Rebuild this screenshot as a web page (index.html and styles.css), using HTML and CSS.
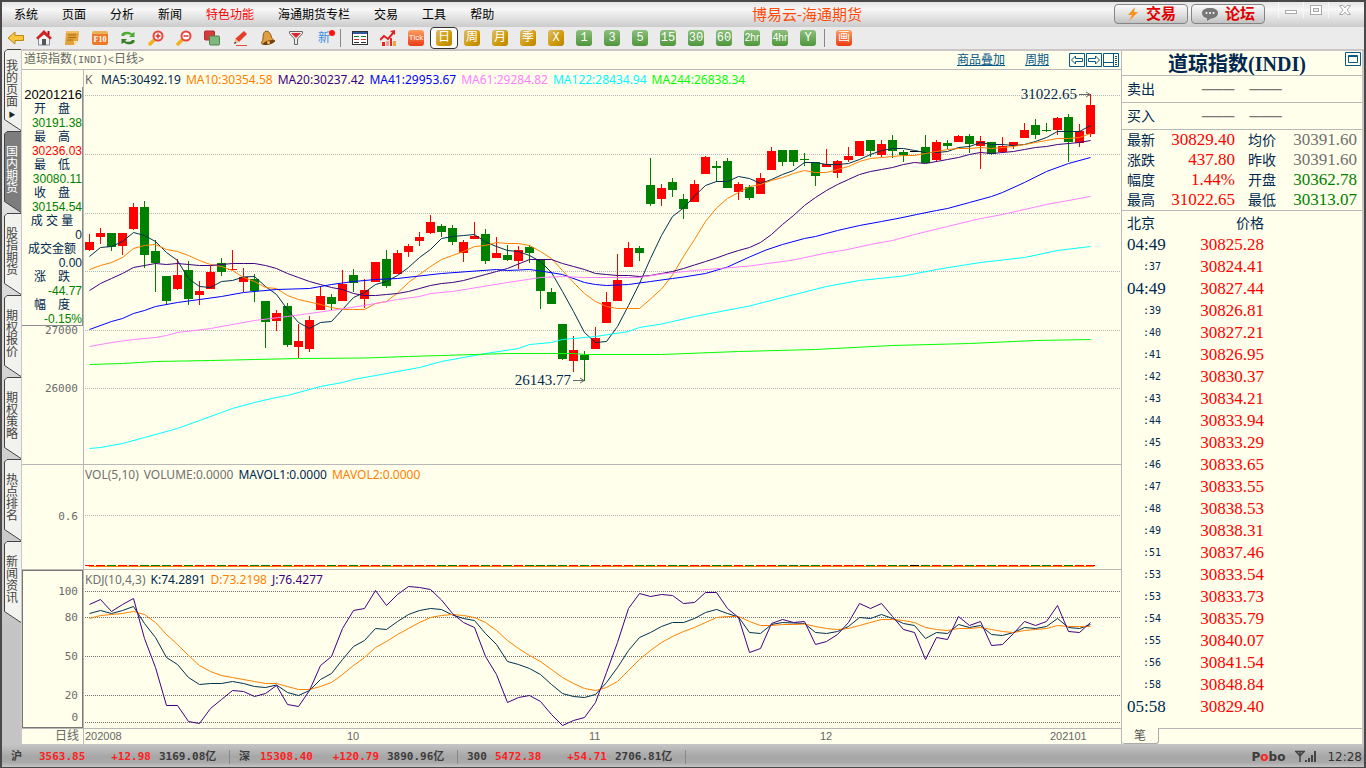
FILE: index.html
```html
<!DOCTYPE html>
<html lang="zh-CN">
<head>
<meta charset="utf-8">
<title>博易云-海通期货</title>
<link rel="stylesheet" href="styles.css">
</head>
<body>
<div class="window">
  <header class="menubar">
    <nav class="menus">
      <button class="menu">系统</button><button class="menu">页面</button><button class="menu">分析</button><button class="menu">新闻</button><button class="menu hot">特色功能</button><button class="menu">海通期货专栏</button><button class="menu">交易</button><button class="menu">工具</button><button class="menu">帮助</button>
    </nav>
    <h1 class="brand">博易云-海通期货</h1>
    <div class="actions">
      <button class="action"><svg width="14" height="16" viewBox="0 0 14 16"><path d="M9 1 2 9h4l-3 6 9-9H8z" fill="#f7941d"/></svg>交易</button>
      <button class="action"><svg width="18" height="16" viewBox="0 0 18 16"><path d="M9 2c5 0 8 2 8 5s-3 5.500-7 5.500L6 15v-3C3 11.500 1 10 1 7c0-3 3-5 8-5z" fill="#777"/><g fill="#fff"><circle cx="5.500" cy="7" r="1"/><circle cx="9" cy="7" r="1"/><circle cx="12.500" cy="7" r="1"/></g></svg>论坛</button>
    </div>
    <div class="controls">
      <button class="control" aria-label="最小化"><svg width="14" height="12"><rect x="1.500" y="6.500" width="11" height="3" fill="#fff" stroke="#aaa"/></svg></button>
      <button class="control" aria-label="还原"><svg width="14" height="12"><rect x="1.500" y="1.500" width="11" height="9" fill="#fff" stroke="#aaa"/><rect x="4.500" y="4.500" width="5" height="3" fill="#eee" stroke="#aaa"/></svg></button>
      <button class="control close" aria-label="关闭"><svg width="14" height="12"><path d="M1.500 1.500h3.500l2 2.500 2-2.500h3.500l-3.500 4.500 3.500 4.500H9L7 8l-2 2.500H1.500L5 6z" fill="#fff" stroke="#aaa"/></svg></button>
    </div>
  </header>

  <div class="toolbar">
    <button class="tool" aria-label="后退"><svg width="18" height="16" viewBox="0 0 18 16"><path d="M1 8 8 2v3.500h8.500v5H8V14z" fill="#f8c53c" stroke="#b98a18"/></svg></button>
    <button class="tool" aria-label="主页"><svg width="16" height="16" viewBox="0 0 16 16"><path d="M2.500 8v7h11V8L8 3z" fill="#eef3f8" stroke="#889"/><path d="M11.500 1h2v4h-2z" fill="#a11"/><path d="M0 8 8 0l8 8-2 1.500-6-5-6 5z" fill="#cf2424"/><path d="M6 9h4v6H6z" fill="#555"/></svg></button>
    <button class="tool" aria-label="公告"><svg width="16" height="16" viewBox="0 0 16 16"><path d="M2 1h13l-1 10-4 4H1z" fill="#e3a23c"/><path d="m14 11-4 4V11z" fill="#ffe0a0"/><path d="M4 5h8M4 7.500h8M3 10h6" stroke="#a86b12"/><path d="M2 1h13v2H2z" fill="#f0bf68"/></svg></button>
    <button class="tool" aria-label="F10"><span class="f10">F10</span></button>
    <button class="tool" aria-label="刷新"><svg width="16" height="16" viewBox="0 0 16 16"><path d="M1.500 6V4c2-3 8-3 10.500-.500L14.500 2v5H9l2-2C8 3.500 5 4 4 6z" fill="#4eaa32"/><path d="M14.500 10v2c-2 3-8 3-10.500.500L1.500 14V9H7l-2 2c3 1.500 6 1 7-1z" fill="#367d25"/></svg></button>
    <button class="tool" aria-label="放大"><svg width="16" height="16" viewBox="0 0 16 16"><path d="m7 9-5 5" stroke="#f0b020" stroke-width="3.500" stroke-linecap="round"/><circle cx="10" cy="6" r="4.500" fill="#fff" stroke="#e8453b" stroke-width="2"/><path d="M7.500 6h5M10 3.500v5" stroke="#d9342b" stroke-width="1.500"/></svg></button>
    <button class="tool" aria-label="缩小"><svg width="16" height="16" viewBox="0 0 16 16"><path d="m7 9-5 5" stroke="#f0b020" stroke-width="3.500" stroke-linecap="round"/><circle cx="10" cy="6" r="4.500" fill="#fff" stroke="#e8453b" stroke-width="2"/><path d="M7.500 6h5" stroke="#d9342b" stroke-width="1.500"/></svg></button>
    <button class="tool" aria-label="叠加"><svg width="16" height="16" viewBox="0 0 16 16"><rect x=".500" y="1" width="10" height="9" rx="1" fill="#d8393d" stroke="#a33"/><rect x="5.500" y="6" width="10" height="9" rx="1" fill="#7fb77f" stroke="#4d854d"/></svg></button>
    <button class="tool" aria-label="画线"><svg width="16" height="16" viewBox="0 0 16 16"><path d="m12 1 3 3-8 8-4-3z" fill="#e83b2c"/><path d="m3.500 8.500 3.500 3.500-5 2z" fill="#eec38b"/><path d="m2 14 1-2.500L4.500 13z" fill="#333"/><path d="M4 15.500h11" stroke="#e64b35"/></svg></button>
    <button class="tool" aria-label="预警"><svg width="16" height="16" viewBox="0 0 16 16"><path d="M5 1.500c3-1 5 1 6 4 .500 2.500 1.500 4 4 5.500L3 14.500c-2-1-2-2-1-3C4 9 2 4 5 1.500z" fill="#e0a040" stroke="#8b5213"/><ellipse cx="9" cy="12.500" rx="6" ry="2" fill="#6f3d10" transform="rotate(-15 9 12.500)"/><circle cx="8.500" cy="12.500" r="1.500" fill="#f6c565"/></svg></button>
    <button class="tool" aria-label="筛选"><svg width="16" height="16" viewBox="0 0 16 16"><path d="M1.500 1.500h13v2L9.500 9v5.500h-3V9l-5-5.500z" fill="#eee" stroke="#666"/><path d="M3 3h10L8 8z" fill="#dc2430"/></svg></button>
    <button class="tool new" aria-label="新">新<svg class="dot" width="6" height="6"><circle cx="3" cy="3" r="3" fill="#f11"/></svg></button>
    <span class="divider"></span>
    <button class="tool" aria-label="报价"><svg width="16" height="16" viewBox="0 0 16 16"><rect x=".500" y="1.500" width="15" height="13" fill="#fff" stroke="#333"/><path d="M1 3h14" stroke="#345b9c" stroke-width="2"/><path d="M2 6.500h5m2 0h5" stroke="#147b25"/><path d="M2 9.500h5m2 0h5" stroke="#c33"/><path d="M2 12.500h5m2 0h5" stroke="#333"/></svg></button>
    <button class="tool" aria-label="分时"><svg width="16" height="16" viewBox="0 0 16 16"><path d="M2 12h3v4H2zM10 8h2v8h-2z" fill="#e22"/><path d="M6 11h3v5H6z" fill="#e5a49b"/><path d="M13 11h3v5h-3z" fill="#f0a43c"/><path d="m0 10 4-4 4 3 6-7" stroke="#d22" stroke-width="2" fill="none"/><path d="m10 1 5-1v5z" fill="#d22"/></svg></button>
    <button class="tool"><span class="tile orange tiny">Tick</span></button>
    <button class="tool selected"><span class="tile gold">日</span></button>
    <button class="tool"><span class="tile gold">周</span></button>
    <button class="tool"><span class="tile gold">月</span></button>
    <button class="tool"><span class="tile gold">季</span></button>
    <button class="tool"><span class="tile gold">X</span></button>
    <button class="tool"><span class="tile green">1</span></button>
    <button class="tool"><span class="tile green">3</span></button>
    <button class="tool"><span class="tile green">5</span></button>
    <button class="tool"><span class="tile green">15</span></button>
    <button class="tool"><span class="tile green">30</span></button>
    <button class="tool"><span class="tile green">60</span></button>
    <button class="tool"><span class="tile green small">2hr</span></button>
    <button class="tool"><span class="tile green small">4hr</span></button>
    <button class="tool"><span class="tile green">Y</span></button>
    <span class="divider"></span>
    <button class="tool"><span class="tile orange">画</span></button>
  </div>

  <div class="workspace">
    <nav class="pages">
      <button class="page first"><svg class="shape" width="17" height="82"><path d="M17 .5H3L.500 3v67.500L17 81.500"/></svg>我的页面<span class="more">▶</span></button>
      <button class="page current"><svg class="shape" width="17" height="82"><path d="M17 .5H3L.500 3v67.500L17 81.500"/></svg>国内期货</button>
      <button class="page"><svg class="shape" width="17" height="82"><path d="M17 .5H3L.500 3v67.500L17 81.500"/></svg>股指期货</button>
      <button class="page"><svg class="shape" width="17" height="82"><path d="M17 .5H3L.500 3v67.500L17 81.500"/></svg>期权报价</button>
      <button class="page"><svg class="shape" width="17" height="82"><path d="M17 .5H3L.500 3v67.500L17 81.500"/></svg>期权策略</button>
      <button class="page"><svg class="shape" width="17" height="82"><path d="M17 .5H3L.500 3v67.500L17 81.500"/></svg>热点排名</button>
      <button class="page"><svg class="shape" width="17" height="82"><path d="M17 .5H3L.500 3v67.500L17 81.500"/></svg>新闻资讯</button>
    </nav>

    <main class="charts">
      <div class="chart-head">
        <h2 class="symbol">道琼指数<span class="latin">(INDI)&lt;</span>日线<span class="latin">&gt;</span></h2>
        <a class="link" href="#overlay">商品叠加</a>
        <a class="link" href="#period">周期</a>
        <div class="pager">
          <button aria-label="上一个"><svg width="16" height="15"><path d="M.500.500h15v13H.500zM2.500 7l4-4v2.500h7v3h-7V11z"/></svg></button>
          <button aria-label="下一个"><svg width="16" height="15"><path d="M.500.500h15v13H.500zM13.500 7l-4-4v2.500h-7v3h7V11z"/></svg></button>
          <button aria-label="布局"><svg width="16" height="15"><path d="M.500.500h15v13H.500zM10.500 1v12M1 9.500h9M12 3.500h2M12 5.500h2M12 7.500h2M12 9.500h2M12 11.500h2"/></svg></button>
        </div>
      </div>

      <div class="panel price-panel">
        <div class="axis">
          <svg width="61" height="394"><text x="56" y="264">27000</text><text x="56" y="322">26000</text></svg>
          <dl class="info">
            <dt class="day">20201216</dt>
            <dt>开　盘</dt><dd class="down">30191.38</dd>
            <dt>最　高</dt><dd class="up">30236.03</dd>
            <dt>最　低</dt><dd class="down">30080.11</dd>
            <dt>收　盘</dt><dd class="down">30154.54</dd>
            <dt>成 交 量</dt><dd>0</dd>
            <dt>成交金额</dt><dd>0.00</dd>
            <dt>涨　跌</dt><dd class="down">-44.77</dd>
            <dt>幅　度</dt><dd class="down">-0.15%</dd>
          </dl>
        </div>
        <div class="plot">
          <div class="legend"><span class="name">K</span><span class="navy">MA5:30492.19</span><span class="amber">MA10:30354.58</span><span class="purple">MA20:30237.42</span><span class="blue">MA41:29953.67</span><span class="pink">MA61:29284.82</span><span class="cyan">MA122:28434.94</span><span class="lime">MA244:26838.34</span></div>
          <svg id="price" class="canvas price-canvas"></svg>
        </div>
      </div>

      <div class="panel">
        <div class="axis"><svg width="61" height="104"><text x="56" y="55">0.6</text></svg></div>
        <div class="plot">
          <div class="legend"><span class="gray">VOL(5,10)</span><span class="gray">VOLUME:0.0000</span><span class="navy">MAVOL1:0.0000</span><span class="amber">MAVOL2:0.0000</span></div>
          <svg id="volume" class="canvas volume-canvas"></svg>
        </div>
      </div>

      <div class="panel">
        <div class="axis boxed"><svg width="59" height="156"><text x="55" y="24">100</text><text x="55" y="50">80</text><text x="55" y="89">50</text><text x="55" y="128">20</text><text x="55" y="150">0</text></svg></div>
        <div class="plot">
          <div class="legend kdj"><span class="gray">KDJ(10,4,3)</span><span class="navy">K:74.2891</span><span class="amber">D:73.2198</span><span class="purple">J:76.4277</span></div>
          <svg id="kdj" class="canvas kdj-canvas"></svg>
        </div>
      </div>

      <div class="panel time-axis">
        <div class="axis period">日线</div>
        <div class="plot"><svg class="canvas months" height="15"><text x="1" y="11">202008</text><text x="263" y="11">10</text><text x="505" y="11">11</text><text x="736" y="11">12</text><text x="966" y="11">202101</text></svg></div>
      </div>
    </main>

    <aside class="quote">
      <div class="quote-title"><h2>道琼指数<span class="latin">(INDI)</span></h2><button class="max" aria-label="最大化"><svg width="16" height="14"><path d="M.500.500h15v13H.500zM3.500 3.500h9v7h-9zM3.500 4.500h9"/></svg></button></div>
      <div class="book"><span>卖出</span><span class="empty">———</span><span class="empty">———</span></div>
      <div class="book"><span>买入</span><span class="empty">———</span><span class="empty">———</span></div>
      <dl class="stats">
        <dt>最新</dt><dd class="up">30829.40</dd><dt>均价</dt><dd class="gray">30391.60</dd>
        <dt>涨跌</dt><dd class="up">437.80</dd><dt>昨收</dt><dd class="gray">30391.60</dd>
        <dt>幅度</dt><dd class="up">1.44%</dd><dt>开盘</dt><dd class="down">30362.78</dd>
        <dt>最高</dt><dd class="up">31022.65</dd><dt>最低</dt><dd class="down">30313.07</dd>
      </dl>
      <table class="ticks">
        <thead><tr><th>北京</th><th>价格</th></tr></thead>
        <tbody>
          <tr><td>04:49</td><td>30825.28</td></tr>
          <tr><td class="sec">:37</td><td>30824.41</td></tr>
          <tr><td>04:49</td><td>30827.44</td></tr>
          <tr><td class="sec">:39</td><td>30826.81</td></tr>
          <tr><td class="sec">:40</td><td>30827.21</td></tr>
          <tr><td class="sec">:41</td><td>30826.95</td></tr>
          <tr><td class="sec">:42</td><td>30830.37</td></tr>
          <tr><td class="sec">:43</td><td>30834.21</td></tr>
          <tr><td class="sec">:44</td><td>30833.94</td></tr>
          <tr><td class="sec">:45</td><td>30833.29</td></tr>
          <tr><td class="sec">:46</td><td>30833.65</td></tr>
          <tr><td class="sec">:47</td><td>30833.55</td></tr>
          <tr><td class="sec">:48</td><td>30838.53</td></tr>
          <tr><td class="sec">:49</td><td>30838.31</td></tr>
          <tr><td class="sec">:51</td><td>30837.46</td></tr>
          <tr><td class="sec">:53</td><td>30833.54</td></tr>
          <tr><td class="sec">:53</td><td>30833.73</td></tr>
          <tr><td class="sec">:54</td><td>30835.79</td></tr>
          <tr><td class="sec">:55</td><td>30840.07</td></tr>
          <tr><td class="sec">:56</td><td>30841.54</td></tr>
          <tr><td class="sec">:58</td><td>30848.84</td></tr>
          <tr><td>05:58</td><td>30829.40</td></tr>
        </tbody>
      </table>
      <div class="quote-tabs"><button class="quote-tab">笔</button><span class="rest"></span></div>
    </aside>
  </div>

  <footer class="status">
    <div class="index"><span class="market">沪</span><span class="pair"><b>3563.85</b><b>+12.98</b></span><span class="amount">3169.08亿</span></div>
    <div class="index"><span class="market near">深</span><span class="pair wide"><b>15308.40</b><b>+120.79</b></span><span class="amount">3890.96亿</span></div>
    <div class="index"><span class="market">300</span><span class="pair"><b>5472.38</b><b>+54.71</b></span><span class="amount">2706.81亿</span></div>
    <div class="tray"><span class="logo">P<b>o</b>bo</span><svg width="22" height="14" viewBox="0 0 22 14"><path d="M0 1.500h10M1.500 2l3.500 4L8.500 2M5 2v10" fill="none" stroke="#444" stroke-width="1.500"/><path d="M10 10h2v2h-2zM13 8h2v4h-2zM16 5h2v7h-2zM19 1h2v11h-2z" fill="#444"/></svg><time class="clock">12:28</time></div>
  </footer>
</div>
<script src="chart.js"></script>
</body>
</html>
```

FILE: styles.css
```css
* { box-sizing: border-box; }
body { margin: 0; font: 12px/14px "Liberation Sans", "Noto Sans CJK SC", sans-serif; color: #002850; background: #ebebeb; }
button { border: 0; padding: 0; margin: 0; background: none; font: inherit; color: inherit; }
h1, h2, dl, dd { margin: 0; font-weight: normal; }
svg { display: block; }
.window { min-height: 100vh; display: flex; flex-direction: column; border: solid #4b484a; border-width: 2px 2px 1px 2px; }

.menubar { height: 25px; display: flex; background: linear-gradient(#e4e4e4, #f7f7f7 30%, #cbcbcb); color: #000; }
.menus { display: flex; }
.menu { padding: 0 12px; }
.hot { color: #f00; }
.brand { flex: 1; text-align: center; font-size: 15px; line-height: 25px; color: #ff4b0a; padding-right: 6px; }
.actions { display: flex; gap: 3px; padding: 2px 0 3px; }
.action { width: 74px; display: flex; align-items: center; justify-content: center; gap: 6px; border: 1px solid #858585; border-radius: 4px; background: linear-gradient(#fbfbfb, #e2e2e2 50%, #c2c2c2); color: #e00000; font-size: 15px; font-weight: bold; }
.controls { display: flex; height: 16px; margin-left: 13px; margin-right: 3px; }
.control { width: 25px; border-left: 1px solid #f8f8f8; display: flex; align-items: center; justify-content: center; }
.close { width: 33px; }

.toolbar { height: 24px; display: flex; background: #ebebeb; border-bottom: 2px solid #ccc5c8; }
.tool { width: 28px; display: flex; align-items: center; justify-content: center; position: relative; }
.divider { width: 8px; padding: 2px 0; }
.divider::before { content: ""; display: block; width: 1px; height: 18px; margin-left: 2px; background: #888; }
.selected { border: 1px solid #333; border-radius: 4px; background: #fff; }
.tile { width: 16px; height: 16px; border-radius: 3px; color: #fff; font: 12px/16px "Liberation Mono", "Noto Sans CJK SC", monospace; text-align: center; white-space: nowrap; }
.gold { background: linear-gradient(135deg, #dcbc68, #cf9a08 60%, #b98500); }
.green { background: linear-gradient(#8cc07c, #4f963c); }
.orange { background: linear-gradient(#ffa060, #ea3a14); }
.small { font: 10px/16px "Liberation Sans", sans-serif; }
.tiny { font: 8px/16px "Liberation Sans", sans-serif; }
.f10 { width: 16px; height: 14px; border-radius: 2px; border-top: 3px solid #e9b25a; background: #ee7a26; color: #fff; font: bold 8px/11px "Liberation Serif", serif; }
.new { color: #3b8ee0; }
.dot { position: absolute; right: 3px; top: 3px; }

.workspace { flex: 1; display: flex; }
.pages { width: 20px; padding-left: 2px; border-right: 2px solid #ccc5c8; background: linear-gradient(#e9e9e9, #c4c4c4 85%); margin-top: -2px; }
.page { position: relative; z-index: 0; width: 17px; height: 82px; padding-top: 15px; display: flex; flex-direction: column; align-items: center; line-height: 12px; color: #444; word-break: break-all; padding-left: 2px; padding-right: 3px; }
.first { padding-top: 11px; }
.more { font-size: 7px; line-height: 14px; color: #222; }
.shape { position: absolute; left: 0; top: 0; z-index: -1; fill: #f2f2ee; stroke: #444; }
.current { color: #fff; }
.current .shape { fill: #7d7d7d; }

.charts { flex: 1; min-width: 0; background: #ffffeb; display: flex; flex-direction: column; }
.chart-head { height: 19px; display: flex; align-items: center; border-bottom: 1px solid #b8b8b8; padding: 0 2px 0 2px; }
.symbol { flex: 1; font-size: 12px; line-height: 18px; color: #666; }
.symbol .latin { font-family: "Liberation Mono", monospace; font-size: 10px; }
.link { color: #07598a; margin-right: 20px; }
.pager { display: flex; gap: 1px; }
.pager svg, .max svg { fill: none; stroke: #07598a; }
.panel { display: flex; border-bottom: 1px solid #b8b8b8; }
.price-panel { flex: 1; }
.axis { width: 62px; flex: none; border-right: 1px solid #b8b8b8; position: relative; }
.axis text { font: 11px "DejaVu Sans Mono", monospace; fill: #6b6b6b; text-anchor: end; }
.boxed { width: 61px; border: 1px solid #777; margin-right: 1px; }
.info { position: absolute; left: 0; top: 17px; width: 61px; height: 239px; padding-top: 1px; background: #ffffeb; border: solid #8c8c8c; border-width: 0 1px 1px 0; text-align: right; }
.info dt { text-align: center; height: 14px; }
.info .day { font-size: 13px; color: #000; text-align: right; }
.info dd { height: 14px; }
.plot { flex: 1; min-width: 0; }
.boxed + .plot { border-left: 1px solid #b8b8b8; margin-left: -1px; }
.legend { height: 18px; display: flex; gap: 5px; padding-left: 1px; font: 12px/20px "Noto Sans", sans-serif; }
.kdj { height: 16px; }
.legend .name { width: 11px; color: #666; }
.canvas { width: 100%; overflow: visible; }
.price-canvas { height: 376px; }
.volume-canvas { height: 86px; }
.kdj-canvas { height: 142px; }
.canvas line { stroke-dasharray: 1 1; }
.canvas polyline { fill: none; stroke-width: 1; }
.canvas .mark { font: 15px "Liberation Serif", serif; fill: #002850; }
.time-axis { border-bottom: 0; }
.period { line-height: 15px; text-align: right; padding-right: 4px; color: #666; }
.months text { font: 11px "Liberation Sans", sans-serif; fill: #666; }

.up { color: #f00; }
.down { color: #008000; }
.gray { color: #707070; }
.navy { color: #002850; }
.amber { color: #ff8000; }
.purple { color: #400080; }
.blue { color: #0000ff; }
.pink { color: #ff80ff; }
.cyan { color: #00f8ff; }
.lime { color: #00ff00; }

.quote { width: 243px; display: flex; flex-direction: column; background: #ffffeb; border-left: 1px solid #b8b8b8; border-right: 2px solid #ccc5c8; font-size: 14px; }
.quote-title { height: 25px; display: flex; border-bottom: 1px solid #b8b8b8; }
.quote-title h2 { flex: 1; padding-left: 7px; text-align: center; font: bold 20px/24px "Noto Sans CJK SC", sans-serif; }
.quote-title .latin { font-family: "Liberation Serif", serif; }
.max { align-self: flex-start; padding: 1px 1px 0 0; }
.book { height: 27px; display: flex; align-items: center; gap: 15px; padding-left: 5px; border-bottom: 1px solid #b8b8b8; }
.book span:first-child { width: 60px; }
.empty { color: #777; font: 18px "Liberation Mono", monospace; }
.stats { display: grid; grid-template-columns: 36px 72px 1fr auto; padding: 0 5px; line-height: 20px; border-bottom: 1px solid #b8b8b8; }
.stats dt:nth-of-type(even) { padding-left: 13px; }
.stats dd { text-align: right; height: 20px; font: 17px/20px "Liberation Serif", serif; }
.ticks { border-collapse: collapse; width: 142px; }
.ticks th { font-weight: normal; padding: 0; height: 23px; }
.ticks th:first-child { text-align: left; padding-left: 5px; }
.ticks th:last-child, .ticks td:last-child { text-align: right; }
.ticks td { height: 22px; padding: 0; font: 17px/22px "Liberation Serif", serif; color: #f00; }
.ticks td:first-child { width: 50px; padding-left: 5px; color: #002850; }
.ticks .sec { font: 10px/22px "DejaVu Sans Mono", monospace; text-align: right; padding-right: 11px; }
.quote-tabs { display: flex; margin-top: auto; height: 16px; color: #555; font-size: 12px; }
.quote-tab { width: 37px; border: solid #aaa; border-width: 0 1px 1px 0; border-radius: 0 0 3px 3px; }
.rest { flex: 1; border-top: 1px solid #b8b8b8; }

.status { height: 23px; display: flex; align-items: center; padding: 2px 2px 0 9px; background: linear-gradient(#c6c6c6, #a6a6a6 55%, #aaa 80%, #c4c4c4); color: #3c3c3c; font: bold 11px/14px "DejaVu Sans Mono", "Noto Sans CJK SC", monospace; }
.index { display: flex; height: 14px; margin-right: 9px; padding-right: 8px; border-right: 1px solid #888; }
.market { width: 28px; }
.near { width: 21px; }
.pair { width: 112px; margin-right: 8px; display: flex; justify-content: space-between; color: #ff2020; }
.wide { width: 119px; }
.amount { width: 62px; }
.tray { margin-left: auto; display: flex; align-items: center; gap: 10px; }
.logo { font: bold 12px/14px "DejaVu Sans", sans-serif; }
.logo b { color: #f22; }
.clock { font: 12px/14px "DejaVu Sans", sans-serif; color: #333; }
```

FILE: chart.js
```js
// Bars are 11px apart, the first one centred at x = 5.5 in the plot.
const STEP = 11, FIRST = 5.5;
const X = i => FIRST + STEP * i;
const NS = 'http://www.w3.org/2000/svg';
function add(parent, tag, attrs, text) {
  const el = document.createElementNS(NS, tag);
  for (const k in attrs) el.setAttribute(k, attrs[k]);
  if (text) el.textContent = text;
  parent.appendChild(el);
  return el;
}
function group(id, top) {
  return add(document.getElementById(id), 'g', { transform: `translate(0 ${-top})` });
}
function grid(g, rows, color) {
  rows.forEach(y => add(g, 'line', { x1: 1, x2: '100%', y1: y + 0.5, y2: y + 0.5, stroke: color }));
}
function line(g, pts, color) {
  add(g, 'polyline', { points: pts.map(p => X(p[0]) + ',' + p[1]).join(' '), stroke: color });
}
const each = ys => ys.map((y, i) => [i, y]);

// colour, wick top, body top, body bottom, wick bottom
const bars = `r234 242 250 251,r228 233 237 244,g233 233 247 251,r233 233 246 255,r203 207 229 230,g201 207 255 268,g240 251 263 292,g276 276 301 304,r259 275 289 290,g261 270 299 305,r281 291 295 305,r266 272 289 289,g258 263 272 276,r250 269 270 270,r268 277 282 292,g274 279 291 302,g301 301 322 348,r310 313 321 331,g303 306 345 347,r324 341 347 358,r316 320 349 352,r287 296 310 310,g294 297 304 310,r270 284 301 301,g269 275 283 292,r279 290 299 308,r262 262 282 282,g250 259 286 288,r250 253 274 274,r244 246 252 257,r232 237 241 246,r215 222 233 234,g224 226 232 237,g225 228 242 245,r240 242 253 262,r222 236 239 239,g229 234 261 264,r237 253 258 258,g245 255 260 261,r246 250 261 269,g245 247 253 263,g259 259 291 309,g288 292 304 304,g324 324 359 360,r336 350 361 372,g351 355 360 381,r327 338 349 349,r292 302 323 323,r254 280 301 301,r242 248 267 267,g246 248 253 261,g158 185 204 206,r184 188 199 206,g178 182 190 197,g194 199 209 219,r180 184 202 202,r156 157 174 174,g161 166 168 182,g158 161 188 188,r182 184 192 200,g185 187 198 200,r173 178 194 194,r147 151 170 170,g150 150 162 166,g150 150 162 166,g153 159 160 166,g162 162 176 186,r149 164 167 167,r160 161 173 178,r147 156 160 162,r141 141 156 156,g140 140 151 157,r140 144 155 157,g135 140 151 158,g150 152 155 162,k151 151 152 152,g135 147 163 163,r140 142 160 162,g140 143 146 149,r135 136 142 142,g134 136 144 153,r136 141 146 169,g142 142 154 155,r137 146 152 153,r142 142 146 149,r123 130 138 138,g119 125 135 139,g123 130 131 132,r117 118 130 135,g114 117 142 162,r124 131 143 147,r94 105 134 137`
  .split(',').map(s => [s[0], ...s.slice(1).split(' ').map(Number)]);
const COLORS = { r: '#ff0000', g: '#008000', k: '#000000' };

const price = group('price', 88);
grid(price, [95, 154, 213, 271, 330, 388], '#b4b4b4');
bars.forEach(([c, hi, top, bottom, lo], i) => {
  add(price, 'rect', { x: X(i) - 0.5, y: hi, width: 1, height: lo - hi, fill: COLORS[c] });
  add(price, 'rect', { x: X(i) - 4.5, y: top, width: 9, height: bottom - top, fill: COLORS[c] });
});
line(price, each([256.5,247.5,246.5,241.5,232.5,235.5,241.5,252.5,260.5,278.5,286.5,287.5,281.5,280.5,277,276.5,286.5,294.5,309.5,322.5,328.5,322.5,321.5,309.5,297.5,292.5,284.5,281.5,275.5,267.5,257.5,249.5,238.5,236.5,235.5,234.5,242,246.5,250.5,251.5,255.5,261.5,272.5,291.5,311.5,332.5,342.5,341.5,326.5,305.5,283.5,258.5,235.5,216.5,208,196,185.5,181.5,181.5,176.5,178.5,183.5,179.5,174.5,170.5,162.5,162.5,164.5,164.5,163.5,159.5,154.5,150.5,148.5,148.5,150.5,152.5,152.5,151.5,147.5,146.5,142.5,144.5,144.5,145.5,144.5,141.5,137.5,131.5,131.5,131.5,125.5]), '#003050');
line(price, each([269.5,265.5,262.5,257.5,248.5,245.5,244.5,249.5,251.5,255.5,260.5,264.5,266.5,270.5,277.5,281.5,287.5,288.5,295.5,299.5,302,304.5,307.5,309.5,309.5,309.5,303.5,301.5,293,282.5,274.5,266.5,259.5,255.5,251.5,246.5,245.5,242.5,243.5,243.5,245.5,251.5,258.5,270.5,282.5,293.5,301.5,306.5,308.5,308.5,308.5,299,289,275,256.5,239.5,221.5,208,198.5,192.5,186.5,184.5,180.5,177.5,173.5,170.5,172.5,172.5,169.5,166.5,161.5,158.5,157.5,156.5,155.5,155.5,153.5,151.5,149.5,148.5,148.5,147.5,148.5,147.5,146.5,144.5,142.5,140.5,138.5,138.5,137.5,133.5]), '#ff8000');
line(price, each([290.5,283.5,278.5,273.5,267.5,265.5,263.5,264.5,263.5,264.5,265.5,265.5,264.5,263.5,263.5,263.5,265.5,268.5,273.5,277.5,281.5,284.5,287.5,289.5,293.5,295.5,295.5,294.5,293.5,291.5,288.5,285.5,283.5,282.5,280.5,277.5,274.5,271.5,268.5,264,259.5,259.5,259.5,263.5,266.5,269.5,273.5,274.5,275.5,275.5,276.5,275.5,273.5,271.5,268.5,265,261.5,258,254,250.5,247.5,242.5,234.5,224.5,215.5,205.5,197.5,190.5,184.5,179.5,174.5,171.5,169.5,167.5,164.5,162.5,163.5,161.5,159.5,157.5,154.5,152.5,153.5,152.5,151.5,149.5,147.5,146.5,144.5,143.5,142.5,140.5]), '#400080');
line(price, [[0,329.5],[2,321.5],[3,318.5],[4,313.5],[5,310.5],[6,306.5],[8,302.5],[10,299.5],[12,296.5],[14,292.5],[17,289.5],[20,288.5],[22,284.5],[24,281.5],[26,279.5],[28,278.5],[32,273.5],[37,269.5],[38,270.5],[40,269.5],[41,271],[43,274.5],[45,282.5],[46,284.5],[47,285.5],[49,284.5],[51,281.5],[53,278.5],[54,277],[56,273.5],[58,267],[60,257],[61.5,250],[63,244.5],[65,238.5],[66,236.5],[68,230.5],[70,225.5],[72,221.5],[73.7,218],[75.2,214.5],[77,210.5],[78,208.5],[80,202.5],[82,196.5],[83,192.5],[85,182.5],[87,171.5],[89,163.5],[91,157.5]], '#0000ff');
line(price, [[0,346.5],[2,342.5],[4,339.5],[6,337.5],[7,335.5],[8,332.5],[11,328.5],[15,320.5],[18,316.5],[20,313.5],[22,310.5],[25,305.5],[28,299.5],[30,296.5],[31,293.5],[33,291.5],[38,282.5],[41,277.5],[43,276.5],[45,277.5],[50,277.5],[52,274],[55,270.5],[60,266],[64,260],[67,253],[68.7,250],[71,244.5],[73,240.5],[75,234.5],[78,226.5],[80.8,219],[83,214.5],[85,209.5],[87,204.5],[91,196.5]], '#ff80ff');
line(price, [[0,448.5],[1,447.5],[3,443.5],[5,437.5],[8,428.5],[10,420.5],[12,412.5],[13,408.5],[15,402.5],[17,397.5],[18,395.5],[21,386.5],[23,382.5],[24,379.5],[26,375.5],[30,367.5],[32,361.5],[36,353.5],[39,348.5],[40,344.5],[42,342.5],[43,339.5],[46,336.5],[49,331.5],[50,327.5],[52,324],[55,316.5],[60,306],[63,297.5],[67,286.5],[70,280.5],[74,276],[77,269.5],[81,262.5],[85,257.5],[88,250.5],[91,246.5]], '#00ffff');
line(price, [[0,364.5],[3,363.5],[6,361.5],[11,360.5],[15,359.5],[19,358.5],[25,358],[29,356.5],[32,355.5],[35,354.5],[38,353.5],[44,353.5],[45,354.5],[52,354.5],[59,351.5],[66,349.5],[73,345.5],[80,343.5],[86,340.5],[91,339.5]], '#00ff00');
// High and low marks
function mark(value, x, y) {
  add(price, 'text', { x: x - 14, y: y + 5, 'text-anchor': 'end', class: 'mark' }, value);
  add(price, 'path', { d: `M${x - 12} ${y + 0.5}h11m-4 -2.5l4 2.5l-4 2.5`, stroke: '#666', fill: 'none' });
}
mark('31022.65', 1007, 94);
mark('26143.77', 501, 380);

const volume = group('volume', 483);
grid(volume, [515], '#b4b4b4');
bars.forEach(([c], i) => add(volume, 'rect', { x: X(i) - 4.5, y: 565, width: 9, height: 1, fill: COLORS[c] }));
add(volume, 'rect', { x: 5, y: 566, width: 1005, height: 1, fill: '#ff8000' });

const kdj = group('kdj', 586);
grid(kdj, [591, 617, 656, 695, 722], '#707070');
line(kdj, each([613.5,610.5,613.5,610.5,606.5,623.5,637.5,657.5,664.5,677.5,684.5,683.5,683.5,681.5,683.5,686.5,687.5,685,692.5,695.5,690.5,679.5,673.5,659.5,646.5,640.5,628.5,629.5,621.5,614.5,610.5,608.5,609.5,615,618.5,620.5,633.5,644.5,661.5,664.5,668.5,674.5,684.5,693.5,696.5,697.5,694.5,682.5,667.5,650.5,637.5,632.5,626.5,622.5,622.5,618.5,612.5,609.5,613.5,617,632.5,633.5,624.5,622.5,623,623.5,632.5,633.5,631.5,626.5,617.5,618.5,614.5,618.5,623.5,625.5,638.5,632.5,633.5,624.5,627.5,625.5,634.5,635.5,632.5,627.5,628.5,626.5,618.5,627.5,628.5,624.5]), '#003050');
line(kdj, each([618.5,615.5,614.5,613.5,611.5,614.5,622.5,634.5,644.5,655.5,665.5,671.5,675.5,677.5,679.5,681.5,683.5,683.5,686.5,689.5,689.5,686.5,682.5,674.5,665.5,657.5,647.5,641.5,634.5,628.5,622.5,617.5,615.5,614.5,615.5,617.5,622.5,630.5,640.5,648.5,655.5,661.5,669.5,677.5,683.5,688.5,690.5,687.5,681.5,670.5,659.5,650.5,642.5,636.5,631.5,627.5,622.5,617.5,616.5,616.5,621.5,625.5,625.5,624.5,624.5,624,626.5,628.5,629.5,628.5,625.5,622.5,619.5,619.5,620.5,622.5,627.5,629.5,630.5,628.5,628.5,627.5,629.5,631.5,632.5,630.5,629.5,628.5,625.5,626.5,626.5,626.5]), '#ff8000');
line(kdj, each([604.5,599.5,611.5,604.5,598.5,638.5,667.5,705.5,705.5,721.5,723.5,708.5,699.5,690.5,691.5,696.5,693.5,685.5,704.5,706.5,690.5,665.5,656.5,628.5,610.5,608.5,590.5,605.5,594.5,586.5,587.5,589.5,600,613.5,622.5,627.5,656.5,674.5,702.5,697.5,695.5,701.5,714.5,725.5,720.5,717.5,702.5,672.5,642.5,608.5,593.5,596.5,594.5,595.5,603.5,602.5,592.5,592.5,608.5,617.5,652.5,648.5,623.5,619.5,622.5,621.5,644.5,641.5,634.5,622.5,603.5,608.5,603.5,616.5,629.5,632.5,659.5,637.5,639.5,616.5,625.5,621.5,645.5,644.5,633.5,621.5,625.5,621.5,605.5,631.5,632.5,622.5]), '#400080');
```
